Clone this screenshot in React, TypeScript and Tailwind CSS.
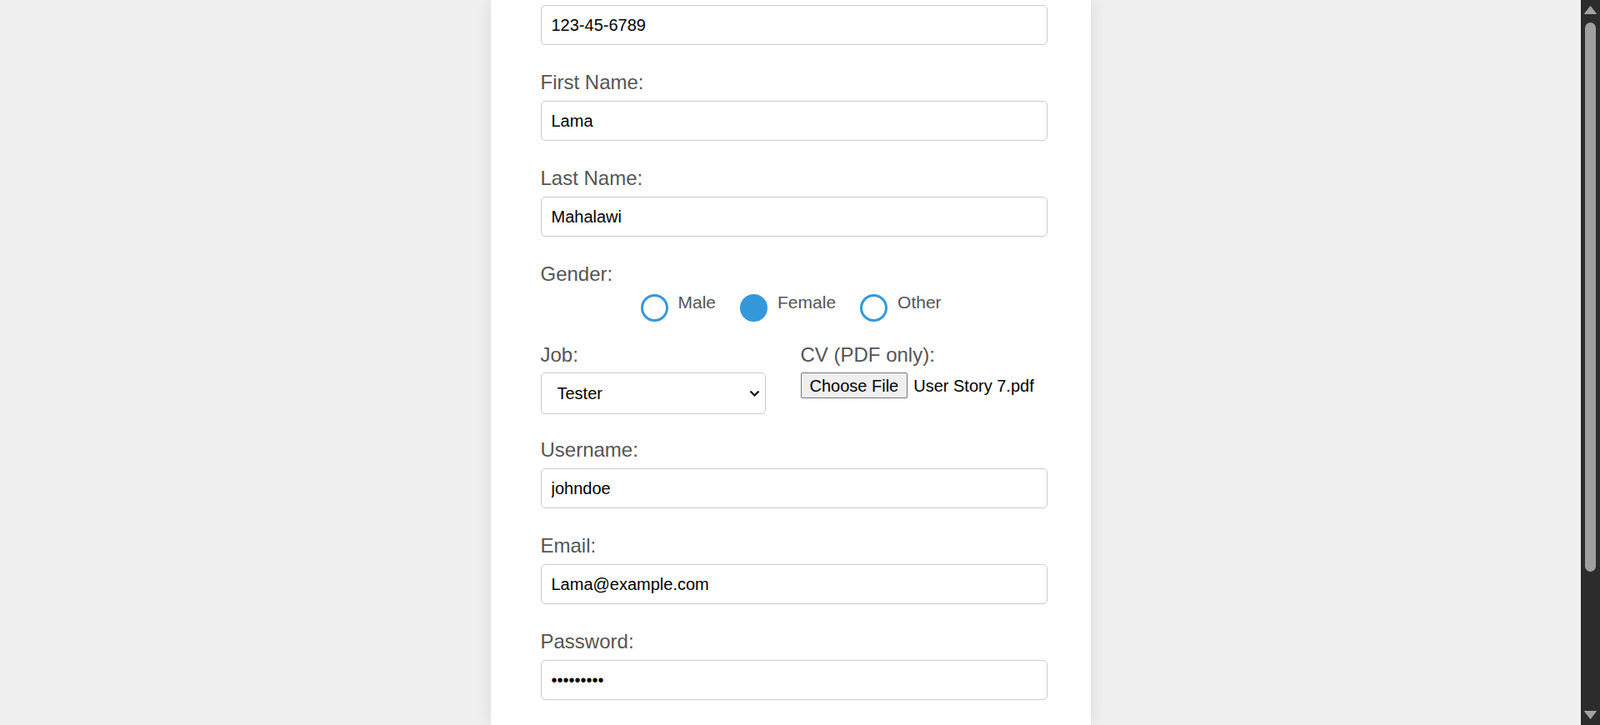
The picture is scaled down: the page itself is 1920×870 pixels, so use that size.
import React from 'react';

const FONT = "font-['Liberation_Sans',Arial,sans-serif]";

const TextField: React.FC<{ label: string; value: string; type?: string; className?: string }> = ({ label, value, type = 'text', className = '' }) => (
  <div className={className}>
    <label className="block text-[24px] leading-[28px] text-[#555]">{label}</label>
    <input
      type={type}
      value={value}
      readOnly
      className={`mt-[8px] block w-[608px] h-[48px] px-[12px] border border-[#ccc] rounded-[5px] text-[20px] text-black bg-white outline-none ${FONT}`}
    />
  </div>
);

const Radio: React.FC<{ label: string; checked?: boolean; last?: boolean }> = ({ label, checked, last }) => (
  <div className={`flex items-start ${last ? '' : 'mr-[29px]'}`}>
    <div
      className={`mt-[2px] w-[33px] h-[33px] rounded-full border-[3px] border-[#3498db] ${checked ? 'bg-[#3498db]' : 'bg-white'}`}
    />
    <span className="ml-[12px] text-[21px] leading-[23px] text-[#555]">{label}</span>
  </div>
);

const Scrollbar: React.FC = () => (
  <div className="w-[23px] shrink-0 bg-[#2c2c2c] flex flex-col items-center pt-[7px] pb-[7px]">
    <svg width="15" height="10" viewBox="0 0 15 10">
      <path d="M7.5 0.5 L14.5 9.5 L0.5 9.5 Z" fill="#a3a3a3" strokeLinejoin="round" stroke="#a3a3a3" strokeWidth="1" />
    </svg>
    <div className="mt-[10px] w-[13px] h-[659px] rounded-full bg-[#9f9f9f]" />
    <div className="flex-1" />
    <svg width="15" height="10" viewBox="0 0 15 10">
      <path d="M0.5 0.5 L14.5 0.5 L7.5 9.5 Z" fill="#a3a3a3" strokeLinejoin="round" stroke="#a3a3a3" strokeWidth="1" />
    </svg>
  </div>
);

export default function App() {
  return (
    <div className={`flex h-screen bg-[#f0f0f0] overflow-hidden ${FONT}`}>
      <div className="flex-1 flex justify-center">
        <div className="w-[720px] bg-white shadow-[0_0_20px_rgba(0,0,0,0.1)] pl-[60px] pt-[6px]">
          {/* SSN (label scrolled out of view) */}
          <input
            type="text"
            value="123-45-6789"
            readOnly
            className={`block w-[608px] h-[48px] px-[12px] border border-[#ccc] rounded-[5px] text-[20px] text-black bg-white outline-none ${FONT}`}
          />

          <TextField className="mt-[31px]" label="First Name:" value="Lama" />
          <TextField className="mt-[31px]" label="Last Name:" value="Mahalawi" />

          {/* Gender */}
          <div className="mt-[31px]">
            <div className="text-[24px] leading-[28px] text-[#555]">Gender:</div>
            <div className="mt-[8px] flex pl-[120px]">
              <Radio label="Male" />
              <Radio label="Female" checked />
              <Radio label="Other" last />
            </div>
          </div>

          {/* Job + CV */}
          <div className="mt-[26px] flex">
            <div className="w-[312px]">
              <div className="text-[24px] leading-[28px] text-[#555]">Job:</div>
              <div className="mt-[7px] w-[270px] h-[50px] border border-[#ccc] rounded-[5px] flex items-center justify-between pl-[19px] pr-[6px]">
                <span className="text-[20px] text-black">Tester</span>
                <svg width="13" height="9" viewBox="0 0 13 9">
                  <path d="M1.5 1.5 L6.5 6.5 L11.5 1.5" fill="none" stroke="#111" strokeWidth="2.2" />
                </svg>
              </div>
            </div>
            <div>
              <div className="text-[24px] leading-[28px] text-[#555]">CV (PDF only):</div>
              <div className="mt-[7px] flex items-center">
                <div className="h-[31px] px-[10px] flex items-center border border-[#767676] rounded-[2px] bg-[#efefef] text-[20px] text-black">
                  Choose File
                </div>
                <span className="ml-[7px] text-[20px] text-black">User Story 7.pdf</span>
              </div>
            </div>
          </div>

          <TextField className="mt-[29px]" label="Username:" value="johndoe" />
          <TextField className="mt-[31px]" label="Email:" value="Lama@example.com" />
          <TextField className="mt-[31px]" label="Password:" value="123456789" type="password" />
        </div>
      </div>
      <Scrollbar />
    </div>
  );
}
